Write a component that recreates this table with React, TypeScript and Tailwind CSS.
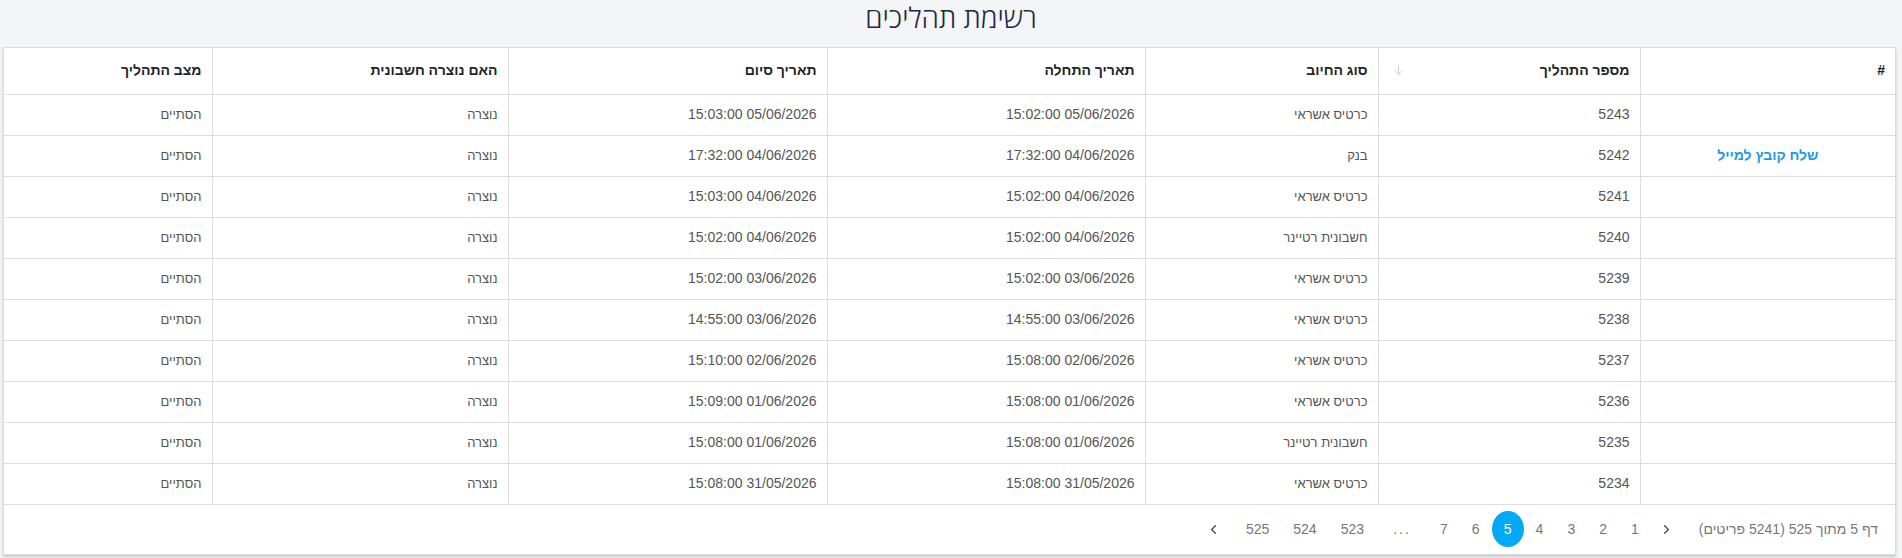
import { ArrowDown, ChevronLeft, ChevronRight } from "lucide-react";

type Row = {
  id: number;
  type: string;
  start: string;
  end: string;
  link?: boolean;
};

const rows: Row[] = [
  { id: 5243, type: "כרטיס אשראי", start: "15:02:00 05/06/2026", end: "15:03:00 05/06/2026" },
  { id: 5242, type: "בנק", start: "17:32:00 04/06/2026", end: "17:32:00 04/06/2026", link: true },
  { id: 5241, type: "כרטיס אשראי", start: "15:02:00 04/06/2026", end: "15:03:00 04/06/2026" },
  { id: 5240, type: "חשבונית רטיינר", start: "15:02:00 04/06/2026", end: "15:02:00 04/06/2026" },
  { id: 5239, type: "כרטיס אשראי", start: "15:02:00 03/06/2026", end: "15:02:00 03/06/2026" },
  { id: 5238, type: "כרטיס אשראי", start: "14:55:00 03/06/2026", end: "14:55:00 03/06/2026" },
  { id: 5237, type: "כרטיס אשראי", start: "15:08:00 02/06/2026", end: "15:10:00 02/06/2026" },
  { id: 5236, type: "כרטיס אשראי", start: "15:08:00 01/06/2026", end: "15:09:00 01/06/2026" },
  { id: 5235, type: "חשבונית רטיינר", start: "15:08:00 01/06/2026", end: "15:08:00 01/06/2026" },
  { id: 5234, type: "כרטיס אשראי", start: "15:08:00 31/05/2026", end: "15:08:00 31/05/2026" },
];

const pages = ["1", "2", "3", "4", "5", "6", "7", "...", "523", "524", "525"];

const App = () => {
  return (
    <div
      dir="rtl"
      className="min-h-[558px] bg-[#f4f5f7] font-['Liberation_Sans',Arial,sans-serif]"
    >
      <h1 className="h-[34px] text-center text-[28px] leading-[34px] font-light text-[#1c2745] font-['Open_Sans','Liberation_Sans',sans-serif]">
        רשימת תהליכים
      </h1>

      <div className="ml-[3px] mr-[6px] mt-[13px] bg-white border border-[#dcdcdc] shadow-[0_2px_3px_rgba(0,0,0,0.18)]">
        <table className="w-full table-fixed border-collapse text-[13px]">
          <colgroup>
            <col className="w-[255px]" />
            <col className="w-[262px]" />
            <col className="w-[233px]" />
            <col className="w-[318px]" />
            <col className="w-[319px]" />
            <col className="w-[296px]" />
            <col />
          </colgroup>
          <thead>
            <tr className="h-[46px] text-[14px] text-[#212529]">
              <th className="border-b border-[#dddddd] px-[10px] text-right font-bold">#</th>
              <th className="border-x border-b border-[#dddddd] px-[10px] text-right font-bold">
                <div className="flex items-center justify-between">
                  <span>מספר התהליך</span>
                  <ArrowDown size={13} strokeWidth={1.25} className="ml-[3px] text-[#b8b8b8]" />
                </div>
              </th>
              <th className="border-x border-b border-[#dddddd] px-[10px] text-right font-bold">סוג החיוב</th>
              <th className="border-x border-b border-[#dddddd] px-[10px] text-right font-bold">תאריך התחלה</th>
              <th className="border-x border-b border-[#dddddd] px-[10px] text-right font-bold">תאריך סיום</th>
              <th className="border-x border-b border-[#dddddd] px-[10px] text-right font-bold">האם נוצרה חשבונית</th>
              <th className="border-b border-[#dddddd] px-[10px] text-right font-bold">מצב התהליך</th>
            </tr>
          </thead>
          <tbody className="text-[#555555]">
            {rows.map((r) => (
              <tr key={r.id} className="h-[41px]">
                <td className="border-b border-[#dddddd] px-[10px] text-center">
                  {r.link && (
                    <a className="text-[14px] font-semibold text-[#1a9be6] cursor-pointer">שלח קובץ למייל</a>
                  )}
                </td>
                <td className="border-x border-b border-[#dddddd] px-[10px] text-right text-[14px]">{r.id}</td>
                <td className="border-x border-b border-[#dddddd] px-[10px] text-right">{r.type}</td>
                <td className="border-x border-b border-[#dddddd] px-[10px] text-right text-[14px]">
                  <span dir="ltr">{r.start}</span>
                </td>
                <td className="border-x border-b border-[#dddddd] px-[10px] text-right text-[14px]">
                  <span dir="ltr">{r.end}</span>
                </td>
                <td className="border-x border-b border-[#dddddd] px-[10px] text-right">נוצרה</td>
                <td className="border-b border-[#dddddd] px-[10px] text-right">הסתיים</td>
              </tr>
            ))}
          </tbody>
        </table>

        <div className="flex h-[49px] items-center pr-[17px] text-[14px] text-[#777777]">
          <span className="ml-[16px]">דף 5 מתוך 525 (5241 פריטים)</span>
          <button className="flex h-9 w-8 items-center justify-center text-[#555555]">
            <ChevronRight size={15} strokeWidth={2.5} />
          </button>
          {pages.map((p) =>
            p === "..." ? (
              <span key={p} className="flex h-9 w-[52px] items-center justify-center tracking-[2px]">
                ...
              </span>
            ) : p === "5" ? (
              <button
                key={p}
                className="flex h-9 w-8 items-center justify-center rounded-[50%] bg-[#03a9f4] text-white"
              >
                {p}
              </button>
            ) : (
              <button key={p} className="flex h-9 items-center justify-center px-3">
                {p}
              </button>
            )
          )}
          <button className="mr-[4px] flex h-9 w-8 items-center justify-center text-[#555555]">
            <ChevronLeft size={15} strokeWidth={2.5} />
          </button>
        </div>
      </div>
    </div>
  );
};

export default App;
